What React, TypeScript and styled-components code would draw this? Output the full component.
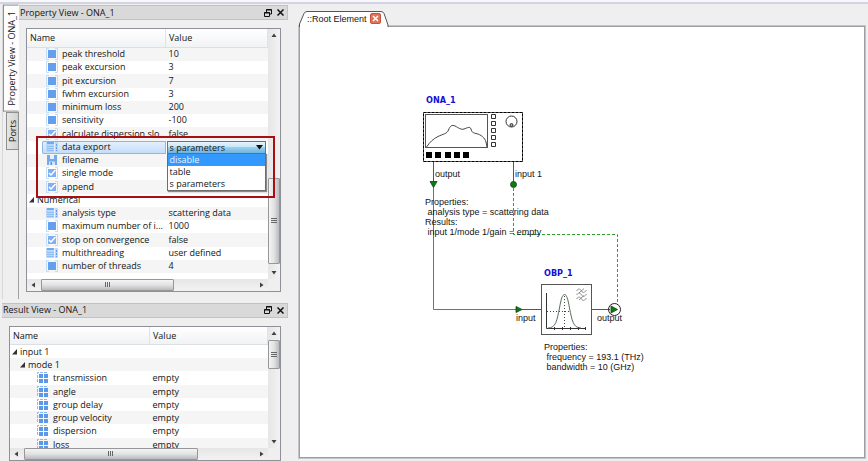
import React from "react";
import styled, { createGlobalStyle, css } from "styled-components";

const GlobalStyle = createGlobalStyle`
  * { box-sizing: border-box; }
  body {
    margin: 0;
    background: #efefef;
    color: #141414;
    font-family: "Open Sans", "Segoe UI", sans-serif;
    font-size: 9px;
    line-height: 12px;
  }
  button, select { font: inherit; color: inherit; }
  svg { flex: none; }
`;

/* ---------- shell ---------- */

const Window = styled.div`
  display: grid;
  grid-template-columns: 288px minmax(0, 1fr);
  column-gap: 10px;
  height: 100vh;
  padding-top: 5px;
  overflow: hidden;
  background: linear-gradient(#f8f8fb 0 2px, #d3d3e6 2px 4px, #efefef 4px);
`;

const Sidebar = styled.div`
  display: flex;
  flex-direction: column;
  gap: 4px;
  min-height: 0;
  padding-left: 2px;
`;

const TabbedDock = styled.div`
  display: flex;
`;

const SideTabs = styled.div`
  display: flex;
  flex-direction: column;
  width: 17px;
  border-left: 1px solid #d8d8d8;
  &::after {
    content: "";
    flex: 1;
    border-right: 1px solid #a2a2a2;
  }
`;

const SideTab = styled.button<{ $active?: boolean }>`
  writing-mode: vertical-rl;
  transform: rotate(180deg);
  border: 1px solid #8f8f8f;
  background: linear-gradient(90deg, #d2d2d2, #e6e6e6);
  padding: 7px 0;
  margin: 0 0 0 3px;
  line-height: 11px;
  white-space: nowrap;
  ${(p) =>
    p.$active &&
    css`
      margin: 0;
      padding: 5px 0;
      line-height: 15px;
      background: #fdfdfd;
      border-left-color: #fdfdfd;
    `}
`;

const Dock = styled.section<{ $fill?: boolean }>`
  display: flex;
  flex-direction: column;
  min-width: 0;
  min-height: 0;
  flex: ${(p) => (p.$fill ? "1" : "1 1 auto")};
  padding-bottom: ${(p) => (p.$fill ? "0" : "7px")};
`;

const DockTitle = styled.header`
  display: flex;
  align-items: center;
  height: 15px;
  padding: 0 0 0 1px;
  background: #d9d9d9;
  border: 1px solid #c2c2c2;
  border-left: 0;
`;

const TitleText = styled.h2`
  flex: 1;
  margin: 0;
  font-size: 9px;
  font-weight: 400;
  white-space: nowrap;
`;

const IconButton = styled.button`
  display: flex;
  align-items: center;
  justify-content: center;
  width: 13px;
  height: 13px;
  padding: 0;
  border: 0;
  background: none;
`;

const TableFrame = styled.div<{ $fill?: boolean }>`
  position: relative;
  display: grid;
  grid-template-columns: minmax(0, 1fr) 12px;
  grid-template-rows: minmax(0, 1fr) 12px;
  margin: 8px 7px 0;
  border: 1px solid #8e9199;
  background: #fff;
  ${(p) =>
    p.$fill &&
    css`
      flex: 1;
      min-height: 0;
    `}
`;

const TableView = styled.div`
  overflow: hidden;
  padding-bottom: 6px;
`;

/* ---------- data table ---------- */

const Table = styled.table<{ $valueWidth: number }>`
  width: 100%;
  border-collapse: collapse;
  table-layout: fixed;
  th:last-child { width: ${(p) => p.$valueWidth}px; }
`;

const HeadCell = styled.th`
  height: 18px;
  padding: 1px 3px 0;
  font-weight: 400;
  text-align: left;
  background: linear-gradient(#ffffff, #f1f2f4);
  border-right: 1px solid #e0e3e8;
  border-bottom: 1px solid #dcdfe4;
`;

const Row = styled.tr<{ $tint: boolean }>`
  height: 13px;
  background: ${(p) => (p.$tint ? "#f5f5f5" : "#ffffff")};
  &:nth-child(4n + 3) { height: 14px; }
`;

const Cell = styled.td<{ $value?: boolean }>`
  position: relative;
  padding: 0 0 0 ${(p) => (p.$value ? "3px" : "0")};
  line-height: 12px;
  white-space: nowrap;
`;

const NameLine = styled.div<{ $indent: number; $leaf: boolean; $selected?: boolean }>`
  display: flex;
  align-items: center;
  gap: ${(p) => (p.$leaf ? "4px" : "2px")};
  height: 13px;
  margin-left: ${(p) => p.$indent}px;
  padding-left: ${(p) => (p.$leaf ? "4px" : "0")};
  ${(p) =>
    p.$selected &&
    css`
      background: linear-gradient(#e6f1fd, #c2dcfa);
      box-shadow: 0 0 0 1px #8ab6e8 inset;
      border-radius: 2px 0 0 2px;
    `}
`;

const Combo = styled.select`
  display: block;
  width: 99px;
  height: 13px;
  margin-left: -2px;
  padding: 0 2px;
  appearance: none;
  line-height: 11px;
  border: 1px solid #3c7fb1;
  border-radius: 0;
  background: linear-gradient(#e5f4fc, #c4e5f6 50%, #98d1ef 50%, #6db3dd);
`;

const ComboArrow = styled.svg`
  position: absolute;
  right: 5px;
  top: 4px;
  pointer-events: none;
`;

const Popup = styled.ul`
  position: absolute;
  z-index: 2;
  top: 12px;
  left: 1px;
  width: 99px;
  margin: 0;
  padding: 0;
  list-style: none;
  background: #fff;
  border: 1px solid #6d6d6d;
  box-shadow: 1px 1px 1px #8a8a8a;
`;

const Option = styled.li<{ $active?: boolean }>`
  height: 12px;
  padding: 0 2px;
  line-height: 11px;
  color: ${(p) => (p.$active ? "#e8f4ff" : "inherit")};
  background: ${(p) => (p.$active ? "#3399ff" : "transparent")};
`;

const Highlight = styled.div`
  position: absolute;
  z-index: 3;
  top: 107px;
  left: 9px;
  width: 239px;
  height: 62px;
  border: 2px solid #a80f12;
  pointer-events: none;
`;

/* ---------- scroll bars ---------- */

const Bar = styled.div<{ $vertical?: boolean }>`
  display: flex;
  flex-direction: ${(p) => (p.$vertical ? "column" : "row")};
  min-height: 0;
  background: ${(p) =>
    p.$vertical
      ? "linear-gradient(90deg, #e6e6e6, #f2f2f2)"
      : "linear-gradient(#e6e6e6, #f2f2f2)"};
`;

const ArrowButton = styled.button<{ $turn: number }>`
  flex: 0 0 12px;
  display: flex;
  align-items: center;
  justify-content: center;
  min-width: 12px;
  padding: 0;
  border: 0;
  background: none;
  svg { transform: rotate(${(p) => p.$turn}deg); }
`;

const Gap = styled.div<{ $grow: number }>`
  flex: ${(p) => p.$grow} 1 0;
`;

const Thumb = styled.div<{ $grow: number; $vertical?: boolean }>`
  flex: ${(p) => p.$grow} 1 0;
  display: flex;
  align-items: center;
  justify-content: center;
  border: 1px solid #979797;
  border-radius: 1px;
  background: linear-gradient(
    ${(p) => (p.$vertical ? "90deg" : "180deg")},
    #f4f4f4,
    #e2e2e4 50%,
    #b9babf
  );
`;

const Corner = styled.div`
  background: #efefef;
`;

type ScrollProps = { vertical?: boolean; before: number; size: number; after: number };

function ScrollBar({ vertical, before, size, after }: ScrollProps) {
  const arrow = (
    <svg width="6" height="4" viewBox="0 0 6 4">
      <path d="M.5 4 3 .5 5.500 4Z" fill="#404040" />
    </svg>
  );
  return (
    <Bar $vertical={vertical}>
      <ArrowButton $turn={vertical ? 0 : -90} aria-label="Scroll back">{arrow}</ArrowButton>
      <Gap $grow={before} />
      <Thumb $grow={size} $vertical={vertical}>
        <svg width="6" height="6" viewBox="0 0 6 6" shapeRendering="crispEdges">
          <path
            d={vertical ? "M0 .5H6M0 2.500H6M0 4.500H6" : "M.5 0V5M2.500 0V5M4.500 0V5"}
            stroke="#666"
          />
        </svg>
      </Thumb>
      <Gap $grow={after} />
      <ArrowButton $turn={vertical ? 180 : 90} aria-label="Scroll on">{arrow}</ArrowButton>
    </Bar>
  );
}

/* ---------- row icons ---------- */

type Kind = "number" | "check" | "list" | "file" | "result";

function RowIcon({ kind }: { kind: Kind }) {
  if (kind === "result") {
    return (
      <svg width="12" height="12" viewBox="0 0 12 12">
        <path d="M.5 10V.5H10" fill="none" stroke="#8ab8f2" strokeDasharray="3 1" />
        <path d="M2 2h4v4H2zM7 2h4v4H7zM2 7h4v4H2zM7 7h4v4H7z" fill="#5b98e8" />
      </svg>
    );
  }
  return (
    <svg width="12" height="12" viewBox="0 0 12 12">
      {(kind === "number" || kind === "check") && (
        <path d="M3 .5H.5V11.5H3M9 .5H11.5V11.5H9" fill="none" stroke="#c3dcf8" />
      )}
      {kind === "number" && <rect x="2" y="2" width="8" height="8" fill="#639fef" />}
      {kind === "check" && (
        <>
          <rect x="2" y="2" width="8" height="8" fill="#7fb1f2" />
          <path d="M3 6 5 8 9.500 3" fill="none" stroke="#fff" strokeWidth="1.500" />
        </>
      )}
      {kind === "list" && (
        <>
          <rect x="0" y="1" width="12" height="10" rx="1" fill="#b9d7fa" />
          <rect x="1" y="1" width="7" height="2" fill="#6fa9f0" />
          <path d="M1 5.500H8M1 7.500H8M1 9.500H8" stroke="#8fbdf5" />
          <path d="M8.500 1V11" stroke="#e4f0fe" />
          <path d="M10.500 3V10" stroke="#5f9fee" strokeDasharray="2 1" />
        </>
      )}
      {kind === "file" && (
        <>
          <path d="M1 1H11V11H1Z" fill="#75a9ee" />
          <path d="M4 1H8V5H4Z" fill="#e6f1fe" />
          <path d="M3 7.500H9V11H3Z" fill="#d3e5fc" />
          <path d="M4.500 8H6V11H4.500Z" fill="#5b92dc" />
        </>
      )}
    </svg>
  );
}

const Expander = () => (
  <svg width="6" height="6" viewBox="0 0 6 6">
    <path d="M0 5.500 5 0V5.500Z" fill="#333" />
  </svg>
);

/* ---------- data ---------- */

type Item = { name: string; value?: string; kind?: Kind; level?: number; combo?: boolean };

const properties: Item[] = [
  { name: "peak threshold", value: "10", kind: "number" },
  { name: "peak excursion", value: "3", kind: "number" },
  { name: "pit excursion", value: "7", kind: "number" },
  { name: "fwhm excursion", value: "3", kind: "number" },
  { name: "minimum loss", value: "200", kind: "number" },
  { name: "sensitivity", value: "-100", kind: "number" },
  { name: "calculate dispersion slo...", value: "false", kind: "check" },
  { name: "data export", kind: "list", combo: true },
  { name: "filename", kind: "file" },
  { name: "single mode", kind: "check" },
  { name: "append", value: "false", kind: "check" },
  { name: "Numerical", level: 0 },
  { name: "analysis type", value: "scattering data", kind: "list" },
  { name: "maximum number of i...", value: "1000", kind: "number" },
  { name: "stop on convergence", value: "false", kind: "check" },
  { name: "multithreading", value: "user defined", kind: "list" },
  { name: "number of threads", value: "4", kind: "number" },
];

const results: Item[] = [
  { name: "input 1", level: 0 },
  { name: "mode 1", level: 1 },
  { name: "transmission", value: "empty", kind: "result" },
  { name: "angle", value: "empty", kind: "result" },
  { name: "group delay", value: "empty", kind: "result" },
  { name: "group velocity", value: "empty", kind: "result" },
  { name: "dispersion", value: "empty", kind: "result" },
  { name: "loss", value: "empty", kind: "result" },
];

const exportModes = ["disable", "table", "s parameters"];

type TableProps = { items: Item[]; tintOdd: boolean; valueWidth: number; leafIndent: number };

function DataTable({ items, tintOdd, valueWidth, leafIndent }: TableProps) {
  const indents = [2, 10, leafIndent];
  return (
    <Table $valueWidth={valueWidth}>
      <thead>
        <tr>
          <HeadCell>Name</HeadCell>
          <HeadCell>Value</HeadCell>
        </tr>
      </thead>
      <tbody>
        {items.map((item, i) => (
          <Row key={item.name} $tint={(i % 2 === 0) === tintOdd}>
            <Cell>
              <NameLine $indent={indents[item.level ?? 2]} $leaf={!!item.kind} $selected={item.combo}>
                {item.kind ? <RowIcon kind={item.kind} /> : <Expander />}
                {item.combo ? <label htmlFor="data-export">{item.name}</label> : <span>{item.name}</span>}
              </NameLine>
            </Cell>
            <Cell $value>
              {item.combo ? (
                <>
                  <Combo id="data-export" defaultValue="s parameters">
                    {exportModes.map((m) => (
                      <option key={m}>{m}</option>
                    ))}
                  </Combo>
                  <ComboArrow width="7" height="5" viewBox="0 0 7 5">
                    <path d="M0 0H7L3.500 4.500Z" fill="#111" />
                  </ComboArrow>
                  <Popup role="listbox" aria-label="data export">
                    {exportModes.map((m, n) => (
                      <Option key={m} role="option" aria-selected={n === 0} $active={n === 0}>
                        {m}
                      </Option>
                    ))}
                  </Popup>
                </>
              ) : (
                item.value
              )}
            </Cell>
          </Row>
        ))}
      </tbody>
    </Table>
  );
}

function TitleBar({ title }: { title: string }) {
  return (
    <DockTitle>
      <TitleText>{title}</TitleText>
      <IconButton aria-label="Float">
        <svg width="8" height="8" viewBox="0 0 8 8" fill="none" stroke="#111">
          <path d="M2.500 3V.5H7.500V5H5.500M2 1H8" />
          <path d="M.5 3.500H5.500V7.500H.5ZM0 4H6" />
        </svg>
      </IconButton>
      <IconButton aria-label="Close">
        <svg width="7" height="7" viewBox="0 0 7 7" stroke="#111" strokeWidth="1.500">
          <path d="M.5 .5 6.500 6.500M6.500 .5 .5 6.500" />
        </svg>
      </IconButton>
    </DockTitle>
  );
}

/* ---------- schematic ---------- */

const Workspace = styled.main`
  display: flex;
  flex-direction: column;
  min-width: 0;
  min-height: 0;
  padding: 6px 3px 3px 1px;
  font-family: "Liberation Sans", Arial, sans-serif;
`;

const DocTab = styled.div`
  position: relative;
  z-index: 1;
  display: flex;
  align-items: center;
  gap: 3px;
  width: 90px;
  height: 15px;
  padding-left: 8px;
  white-space: nowrap;
`;

const TabShape = styled.svg`
  position: absolute;
  inset: 0;
  z-index: -1;
`;

const CloseTab = styled.button`
  display: flex;
  align-items: center;
  justify-content: center;
  width: 11px;
  height: 11px;
  padding: 0;
  border: 1px solid #c4543c;
  border-radius: 2px;
  background: #e0735a;
`;

const Canvas = styled.div`
  position: relative;
  flex: 1;
  min-height: 0;
  overflow: hidden;
  background: #fff;
  border: 1px solid #9b9da3;
  outline: 1px solid #c4c5ca;
`;

const Drawing = styled.svg`
  display: block;
`;

const Label = styled.div<{ $x: number; $y: number; $title?: boolean }>`
  position: absolute;
  left: ${(p) => p.$x}px;
  top: ${(p) => p.$y}px;
  line-height: 10px;
  white-space: pre;
  ${(p) =>
    p.$title &&
    css`
      font-family: "DejaVu Sans Condensed", "DejaVu Sans", Tahoma, sans-serif;
      font-weight: 700;
      color: #1010d8;
    `}
`;

function Schematic() {
  return (
    <Canvas>
      <Drawing width="564" height="430" viewBox="300 27 564 430" fill="none">
        <g stroke="#2fa02f">
          <path d="M433.500 186V309.500H518" />
          <path d="M513.500 188V234.500H617.500V305" strokeDasharray="3 2" />
        </g>
        <g stroke="#555">
          <path d="M433.500 162V182M513.500 162V182M522 309.500H541M592 309.500H610" />
        </g>
        <g fill="#0b7d0b" stroke="#123f12" strokeWidth=".8">
          <path d="M430 181.500H437L433.500 187.500Z" />
          <circle cx="513.500" cy="184.500" r="3" />
          <path d="M516 306.500V312.500L522 309.500Z" />
          <path d="M611 306V313L617.500 309.500Z" />
        </g>
        <circle cx="614.500" cy="309.500" r="6" stroke="#222" />

        <rect x="423.500" y="112.500" width="99" height="49" fill="#fff" stroke="#999" />
        <rect x="423.500" y="112.500" width="99" height="49" stroke="#000" strokeDasharray="3 1" />
        <rect x="425.500" y="114.500" width="62" height="33" stroke="#555" />
        <path
          d="M426.500 147C430 142 433 139 438 136.500C443 134 447 134 448.500 130C450 126 452 124.500 455 126C459 128 461 130 464 129C467 128 470 126 471 129C472 132 472 132.500 476 133.500C481 134.500 485 138 486 142L487 147"
          stroke="#444"
        />
        <path
          d="M491.500 114.500h4v4h-4zM491.500 121.500h4v4h-4zM491.500 128.500h4v4h-4zM491.500 135.500h4v4h-4zM491.500 142.500h4v4h-4z"
          stroke="#333"
        />
        <path
          d="M426 152h6v6h-6zM435 152h6v6h-6zM445 152h6v6h-6zM454 152h6v6h-6zM463 152h6v6h-6z"
          fill="#000"
        />
        <circle cx="511.500" cy="121.500" r="5.500" stroke="#333" />
        <circle cx="511.500" cy="125" r="1.500" fill="#aaa" stroke="#333" />

        <rect x="541.500" y="284.500" width="50" height="50" fill="#fff" stroke="#555" />
        <path d="M546.500 293V328.500H586M554.500 327v3M562.500 327v3M570.500 327v3M578.500 327v3M585.500 327v3" stroke="#333" />
        <path d="M547 311.500H570M564.500 296V328" stroke="#444" strokeDasharray="1 2" />
        <path
          d="M548 328C556 328 557 320 559.500 308C561 299 562.500 294.500 564.500 294.500C566.500 294.500 568 299 569.500 308C572 320 573 328 581 328"
          stroke="#56705a"
        />
        <g stroke="#777" strokeWidth=".8">
          <path d="M576.500 291c2-3 4-2 5 0s3 2 5-1" />
          <path d="M576.500 295c2-3 4-2 5 0s3 2 5-1" />
          <path d="M576.500 299c2-3 4-2 5 0s3 2 5-1" />
          <path d="M579 293 584 288.500M579 300 584 295.500" />
        </g>
      </Drawing>
      <Label $x={126} $y={68} $title>ONA_1</Label>
      <Label $x={135} $y={142}>output</Label>
      <Label $x={215} $y={142}>input 1</Label>
      <Label $x={125} $y={170}>
        {"Properties:\n analysis type = scattering data\nResults:\n input 1/mode 1/gain = empty"}
      </Label>
      <Label $x={244} $y={241} $title>OBP_1</Label>
      <Label $x={216} $y={286}>input</Label>
      <Label $x={297} $y={286}>output</Label>
      <Label $x={244} $y={315}>{"Properties:\n frequency = 193.1 (THz)\n bandwidth = 10 (GHz)"}</Label>
    </Canvas>
  );
}

export default function App() {
  return (
    <>
      <GlobalStyle />
      <Window>
        <Sidebar>
          <TabbedDock>
            <SideTabs role="tablist">
              <SideTab $active role="tab" aria-selected>Property View - ONA_1</SideTab>
              <SideTab role="tab" aria-selected={false}>Ports</SideTab>
            </SideTabs>
            <Dock>
              <TitleBar title="Property View - ONA_1" />
              <TableFrame>
                <TableView>
                  <DataTable items={properties} tintOdd valueWidth={102} leafIndent={15} />
                </TableView>
                <ScrollBar vertical before={138} size={84} after={3} />
                <ScrollBar before={2} size={132} after={82} />
                <Corner />
                <Highlight />
              </TableFrame>
            </Dock>
          </TabbedDock>
          <Dock $fill>
            <TitleBar title="Result View - ONA_1" />
            <TableFrame $fill>
              <TableView>
                <DataTable items={results} tintOdd={false} valueWidth={118} leafIndent={23} />
              </TableView>
              <ScrollBar vertical before={2} size={27} after={67} />
              <ScrollBar before={2} size={172} after={58} />
              <Corner />
            </TableFrame>
          </Dock>
        </Sidebar>
        <Workspace>
          <DocTab>
            <TabShape width="90" height="16" viewBox="0 0 90 16">
              <path d="M.5 16V13L5 2.500Q6 .5 8 .5H82Q84 .5 85 2.500L89 14V16" fill="#fff" stroke="#555" />
            </TabShape>
            <span>::Root Element</span>
            <CloseTab aria-label="Close tab">
              <svg width="7" height="7" viewBox="0 0 7 7" stroke="#fff" strokeWidth="1.500">
                <path d="M1 1 6 6M6 1 1 6" />
              </svg>
            </CloseTab>
          </DocTab>
          <Schematic />
        </Workspace>
      </Window>
    </>
  );
}
